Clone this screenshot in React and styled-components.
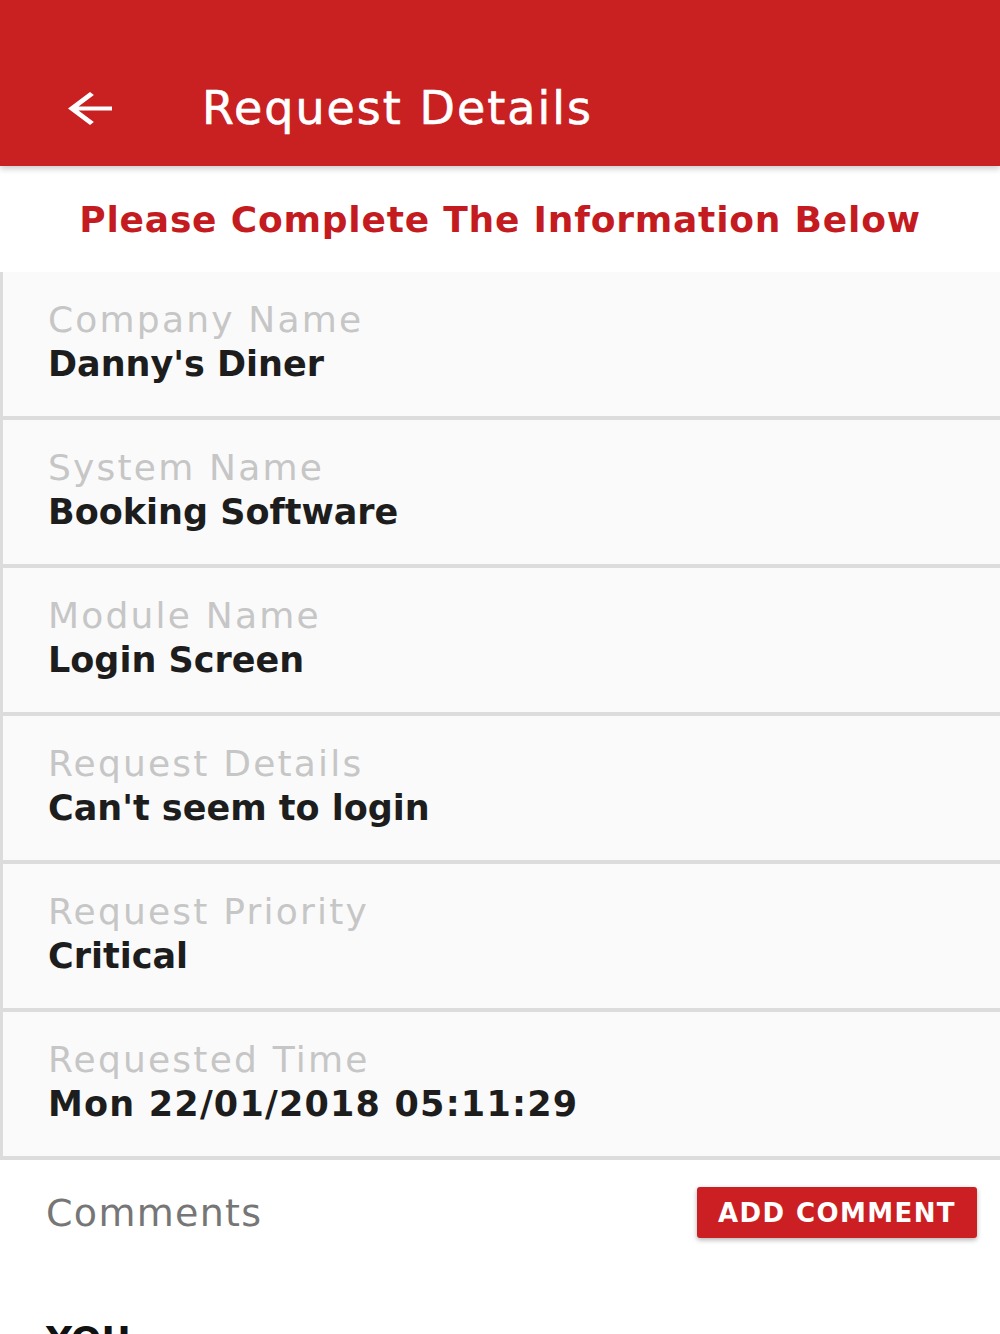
import React from "react";
import styled, { createGlobalStyle } from "styled-components";

const GlobalStyle = createGlobalStyle`
  body {
    margin: 0;
    background: #fff;
    font-family: "DejaVu Sans", "Liberation Sans", sans-serif;
  }
`;

const Screen = styled.div`
  width: 1000px;
  min-height: 1334px;
  background: #fff;
  overflow: hidden;
`;

const Header = styled.header`
  position: relative;
  z-index: 1;
  box-sizing: border-box;
  height: 166px;
  padding-top: 50px;
  display: flex;
  align-items: center;
  background: #c92022;
  box-shadow: 0 3px 6px rgba(0, 0, 0, 0.2);
`;

const BackButton = styled.button`
  display: flex;
  margin-left: 68px;
  padding: 0;
  border: none;
  background: none;
  cursor: pointer;
`;

const Title = styled.h1`
  margin: 0 0 0 90px;
  font-size: 46px;
  font-weight: normal;
  letter-spacing: 2px;
  color: #fff;
  -webkit-text-stroke: 0.6px #fff;
`;

const Intro = styled.div`
  height: 106px;
  display: flex;
  align-items: center;
  justify-content: center;
  font-size: 36px;
  font-weight: bold;
  letter-spacing: 0.8px;
  color: #c41b20;
`;

const Field = styled.div`
  background: #fafafa;
  border-left: 3px solid #dcdcdc;
  border-bottom: 4px solid #dcdcdc;
  padding: 26px 48px 30px 45px;
`;

const Label = styled.div`
  font-size: 36px;
  line-height: 44px;
  letter-spacing: 2.2px;
  color: #c6c6c6;
`;

const Value = styled.div`
  font-size: 35px;
  line-height: 44px;
  font-weight: bold;
  letter-spacing: ${(p) => (p.$wide ? "1.2px" : "0")};
  color: #1d1d1d;
`;

const CommentsBar = styled.div`
  display: flex;
  align-items: center;
  justify-content: space-between;
  padding: 27px 23px 0 46px;
`;

const CommentsTitle = styled.div`
  font-size: 38px;
  letter-spacing: 1.3px;
  color: #767676;
`;

const AddButton = styled.button`
  width: 280px;
  height: 51px;
  border: none;
  border-radius: 3px;
  background: #cc1f24;
  color: #fff;
  font-family: inherit;
  font-size: 26px;
  font-weight: bold;
  letter-spacing: 1.4px;
  box-shadow: 0 2px 5px rgba(0, 0, 0, 0.3);
  cursor: pointer;
`;

const Author = styled.div`
  margin-top: 80px;
  padding-left: 46px;
  font-size: 36px;
  line-height: 44px;
  font-weight: bold;
  color: #111;
`;

const fields = [
  { label: "Company Name", value: "Danny's Diner" },
  { label: "System Name", value: "Booking Software" },
  { label: "Module Name", value: "Login Screen" },
  { label: "Request Details", value: "Can't seem to login" },
  { label: "Request Priority", value: "Critical" },
  { label: "Requested Time", value: "Mon 22/01/2018 05:11:29", wide: true },
];

const BackArrow = () => (
  <svg width="44" height="33" viewBox="4 4 16 16" preserveAspectRatio="none">
    <path
      fill="#fff"
      d="M20 11H7.83l5.59-5.59L12 4l-8 8 8 8 1.41-1.41L7.83 13H20v-2z"
    />
  </svg>
);

const App = () => {
  return (
    <Screen>
      <GlobalStyle />
      <Header>
        <BackButton>
          <BackArrow />
        </BackButton>
        <Title>Request Details</Title>
      </Header>

      <Intro>Please Complete The Information Below</Intro>

      {fields.map((f) => (
        <Field key={f.label}>
          <Label>{f.label}</Label>
          <Value $wide={f.wide}>{f.value}</Value>
        </Field>
      ))}

      <CommentsBar>
        <CommentsTitle>Comments</CommentsTitle>
        <AddButton>ADD COMMENT</AddButton>
      </CommentsBar>

      <Author>YOU</Author>
    </Screen>
  );
};
export default App;
